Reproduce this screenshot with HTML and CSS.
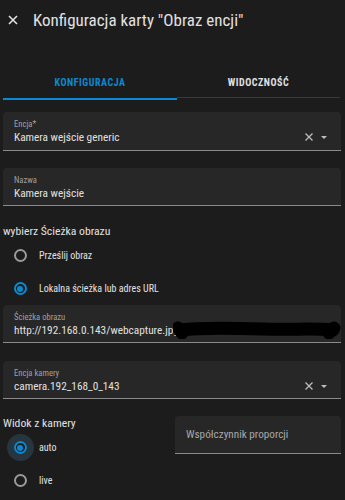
FILE: index.html
```html
<!DOCTYPE html>
<html lang="pl">

<head>
    <meta charset="UTF-8">
    <title>Konfiguracja karty "Obraz encji"</title>
    <meta name="viewport" content="width=device-width, initial-scale=1.0" />
    <link rel="stylesheet" href="styles.css">
</head>

<body>
    <div class="header">
        <svg class="close" width="10" height="10" viewBox="0 0 10 10">
            <path d="M1 1 L9 9 M9 1 L1 9" />
        </svg>
        <h1>Konfiguracja karty "Obraz encji"</h1>
    </div>

    <div class="tabs">
        <div class="tab active">KONFIGURACJA</div>
        <div class="tab">WIDOCZNOŚĆ</div>
    </div>

    <div class="content">
        <div class="field combo first">
            <div class="field-text">
                <div class="field-label">Encja*</div>
                <div class="field-value">Kamera wejście generic</div>
            </div>
            <svg class="clear" width="8" height="8" viewBox="0 0 8 8">
                <path d="M0.5 0.5 L7.5 7.5 M7.5 0.5 L0.5 7.5" />
            </svg>
            <svg class="arrow" width="6" height="3" viewBox="0 0 6 3">
                <path d="M0 0 L6 0 L3 3 Z" />
            </svg>
        </div>

        <div class="field">
            <div class="field-text">
                <div class="field-label">Nazwa</div>
                <div class="field-value">Kamera wejście</div>
            </div>
        </div>

        <div class="section-title">wybierz Ścieżka obrazu</div>
        <div class="radio-row">
            <span class="radio"></span>
            <span class="radio-label">Prześlij obraz</span>
        </div>
        <div class="radio-row">
            <span class="radio checked"></span>
            <span class="radio-label">Lokalna ścieżka lub adres URL</span>
        </div>

        <div class="field after-radio">
            <div class="field-text">
                <div class="field-label">Ścieżka obrazu</div>
                <div class="field-value">http://192.168.0.143/webcapture.jpg</div>
            </div>
            <!-- zamazany fragment adresu -->
            <svg class="scribble" width="172" height="18" viewBox="0 0 172 18">
                <path d="M7 9 C30 6 60 7 90 8 C120 9 142 7 160 9" />
                <path d="M5 7 L9 12 M156 12 L161 7" />
            </svg>
        </div>

        <div class="field combo">
            <div class="field-text">
                <div class="field-label">Encja kamery</div>
                <div class="field-value">camera.192_168_0_143</div>
            </div>
            <svg class="clear" width="8" height="8" viewBox="0 0 8 8">
                <path d="M0.5 0.5 L7.5 7.5 M7.5 0.5 L0.5 7.5" />
            </svg>
            <svg class="arrow" width="6" height="3" viewBox="0 0 6 3">
                <path d="M0 0 L6 0 L3 3 Z" />
            </svg>
        </div>

        <div class="bottom">
            <div class="camera-view">
                <div class="section-title">Widok z kamery</div>
                <div class="radio-row">
                    <span class="radio checked focused"></span>
                    <span class="radio-label">auto</span>
                </div>
                <div class="radio-row">
                    <span class="radio"></span>
                    <span class="radio-label">live</span>
                </div>
            </div>
            <div class="field aspect">
                <span class="placeholder">Współczynnik proporcji</span>
            </div>
        </div>
    </div>
</body>

</html>
```
FILE: styles.css
```css
body {
    font-family: "Roboto Condensed", Roboto, sans-serif;
    margin: 0;
    background: #1c1c1c;
    color: #e1e1e1;
    overflow: hidden;
}

.header {
    height: 40px;
    display: flex;
    align-items: center;
}

.close {
    margin-left: 8px;
    fill: none;
    stroke: #e1e1e1;
    stroke-width: 1.6;
}

h1 {
    margin: 0 0 0 15px;
    font-size: 17px;
    line-height: 20px;
    font-weight: 400;
    white-space: nowrap;
}

.tabs {
    display: flex;
    margin: 26px 5px 0 3px;
}

.tab {
    height: 32px;
    display: flex;
    align-items: center;
    justify-content: center;
    font-size: 10px;
    font-weight: 700;
    letter-spacing: 0.55px;
    border-bottom: 2px solid transparent;
    box-shadow: inset 0 -1px 0 #3a3a3a;
    flex: 1;
}

.tab.active {
    flex: 0 0 174px;
    color: #0a8ad2;
    border-bottom-color: #0a8ad2;
    box-shadow: none;
}

.content {
    padding: 0 4px 0 3px;
}

.field {
    position: relative;
    height: 38px;
    box-sizing: border-box;
    margin-top: 17px;
    padding: 7px 14px 0 11px;
    background: #272727;
    border-radius: 4px 4px 0 0;
    border-bottom: 1px solid #8a8a8a;
    display: flex;
    align-items: flex-start;
}

.field.combo {
    margin-top: 18px;
}

.field.first {
    height: 39px;
    margin-top: 12px;
}

.field.after-radio {
    margin-top: 0;
}

.field-text {
    flex: 1;
    min-width: 0;
}

.field-label {
    font-size: 8.6px;
    line-height: 11px;
    color: #a0a0a0;
}

.field-value {
    font-size: 11.3px;
    line-height: 16px;
    white-space: nowrap;
}

.clear {
    margin-top: 14px;
    fill: none;
    stroke: #bdbdbd;
    stroke-width: 1.3;
}

.arrow {
    margin: 17px 0 0 8px;
    fill: #bdbdbd;
}

.scribble {
    position: absolute;
    left: 170px;
    top: 16px;
    fill: none;
    stroke: #000;
    stroke-width: 13;
    stroke-linecap: round;
}

.section-title {
    margin-top: 17px;
    font-size: 11.7px;
    line-height: 16px;
}

.radio-row {
    height: 33px;
    display: flex;
    align-items: center;
}

.radio {
    position: relative;
    width: 13px;
    height: 13px;
    box-sizing: border-box;
    margin-left: 10.5px;
    border: 2px solid #9a9a9a;
    border-radius: 50%;
}

.radio.checked {
    border-color: #0a8ad2;
}

.radio.checked::after {
    content: "";
    position: absolute;
    left: 1.5px;
    top: 1.5px;
    width: 6px;
    height: 6px;
    border-radius: 50%;
    background: #0a8ad2;
}

.radio.focused {
    box-shadow: 0 0 0 7px #27353e;
}

.radio-label {
    margin-left: 12.5px;
    font-size: 10px;
}

.bottom {
    display: grid;
    grid-template-columns: 172px 1fr;
}

.camera-view .section-title {
    margin-top: 16px;
}

.field.aspect {
    margin-top: 17px;
    align-items: center;
    padding-top: 0;
}

.placeholder {
    font-size: 11.2px;
    color: #a8a8a8;
}
```
